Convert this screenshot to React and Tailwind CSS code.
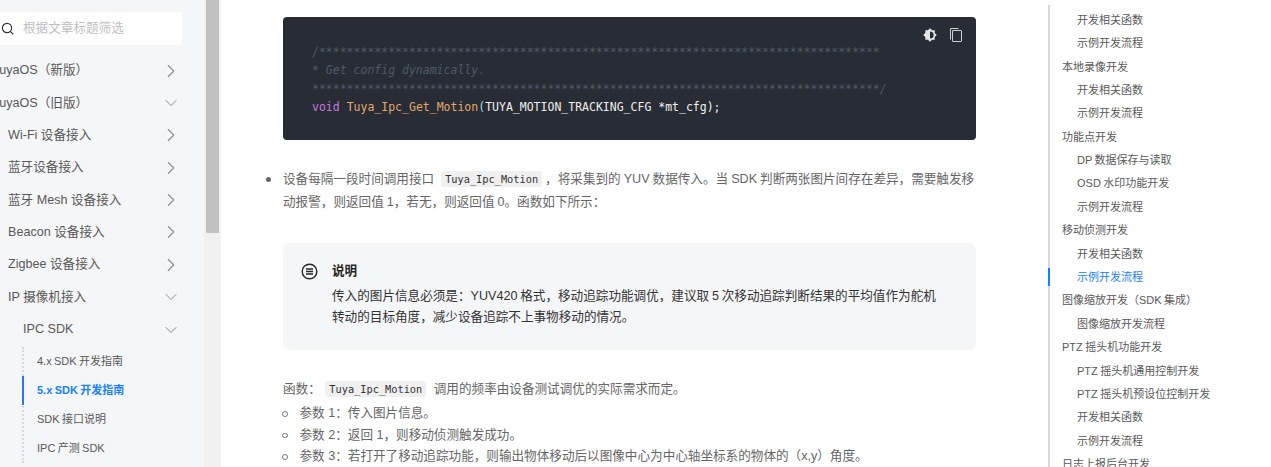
import React from "react";
import { ChevronRight, ChevronDown } from "lucide-react";

const sans = "font-['Liberation_Sans','Noto_Sans_CJK_SC',sans-serif]";
const mono = "font-['DejaVu_Sans_Mono','Noto_Sans_CJK_SC',monospace]";

function NavRow({ label, open, pl }) {
  return (
    <div className={`flex items-center justify-between h-[32.35px] pr-[22px] ${pl}`}>
      <span className="whitespace-nowrap">{label}</span>
      {open ? (
        <ChevronDown size={20} strokeWidth={1.2} className="text-[#8c8c8c] mr-[1px]" />
      ) : (
        <ChevronRight size={22} strokeWidth={1.2} className="text-[#8c8c8c]" />
      )}
    </div>
  );
}

function Sidebar() {
  return (
    <aside className="w-[204px] shrink-0 h-full bg-[#f5f6f8] overflow-hidden text-[12.6px] text-[#595959]">
      <div className="pt-[12px] pr-[22px]">
        <div className="h-[33px] bg-white flex items-center pl-[1px]">
          <svg width="13" height="13" viewBox="0 0 13 13" fill="none" stroke="#333" strokeWidth="1.2">
            <circle cx="6" cy="6" r="4.6" />
            <path d="M9.3 9.3l3 3" />
          </svg>
          <span className="ml-[9px] text-[#bfbfbf]">根据文章标题筛选</span>
        </div>
      </div>
      <div className="mt-[9.6px]">
        <NavRow label="TuyaOS（新版）" pl="-ml-[8px]" />
        <NavRow label="TuyaOS（旧版）" open pl="-ml-[8px]" />
        <NavRow label="Wi-Fi 设备接入" pl="pl-[8px]" />
        <NavRow label="蓝牙设备接入" pl="pl-[8px]" />
        <NavRow label="蓝牙 Mesh 设备接入" pl="pl-[8px]" />
        <NavRow label="Beacon 设备接入" pl="pl-[8px]" />
        <NavRow label="Zigbee 设备接入" pl="pl-[8px]" />
        <NavRow label="IP 摄像机接入" open pl="pl-[8px]" />
        <NavRow label="IPC SDK" open pl="pl-[23px]" />
      </div>
      <div className="ml-[22px] border-l-2 border-dotted border-[#d9d9d9] text-[11px] mt-[1.4px] [word-spacing:-0.7px]">
        <div className="h-[29px] flex items-center pl-[13px]">4.x SDK 开发指南</div>
        <div className="h-[29px] flex items-center pl-[13px] -ml-[2px] border-l-2 border-[#1a7fff] text-[#1a7fff] font-bold">
          5.x SDK 开发指南
        </div>
        <div className="h-[29px] flex items-center pl-[13px]">SDK 接口说明</div>
        <div className="h-[29px] flex items-center pl-[13px]">IPC 产测 SDK</div>
      </div>
    </aside>
  );
}

function Scrollbar() {
  return (
    <div className="w-[17px] shrink-0 h-full bg-[#f1f1f1] px-[2px]">
      <div className="h-[233px] bg-[#c1c1c1]" />
    </div>
  );
}

function Code({ children, className }) {
  return (
    <code className={`${mono} text-[10.3px] leading-[14px] text-[#333] bg-[#f0f0f0] rounded-[3px] px-[4px] py-[2px] ${className}`}>
      {children}
    </code>
  );
}

function CodeBlock() {
  return (
    <div className={`h-[123px] bg-[#282c34] rounded-[4px] pt-[26px] pl-[29px] relative ${mono} text-[11.5px] leading-[18.4px] whitespace-pre`}>
      <div className="absolute right-[12px] top-[10px] flex items-center gap-[10px]">
        <svg width="16" height="16" viewBox="0 0 16 16">
          <path fill="#e6e6e6" d="M8 1.2l2.1 2.1h2.6v2.6L14.8 8l-2.1 2.1v2.6h-2.6L8 14.8l-2.1-2.1H3.3v-2.6L1.2 8l2.1-2.1V3.3h2.6z" />
          <circle cx="8" cy="8" r="3.6" fill="#282c34" />
          <path fill="#e6e6e6" d="M8 3.6a4.4 4.4 0 0 0 0 8.8z" />
        </svg>
        <svg width="16" height="16" viewBox="0 0 16 16" fill="none" stroke="#d0d0d0" strokeWidth="1">
          <path d="M2.5 12.5V1.5h8" />
          <rect x="4.5" y="3.5" width="9" height="11" rx="0.5" />
        </svg>
      </div>
      <div className="text-[#4e5a6a] italic">{"/" + "*".repeat(81)}</div>
      <div className="text-[#4e5a6a] italic">* Get config dynamically.</div>
      <div className="text-[#4e5a6a] italic">{"*".repeat(82) + "/"}</div>
      <div className="text-[#f0f0f0]">
        <span className="text-[#c678dd]">void</span>{" "}
        <span className="text-[#e5a86c]">Tuya_Ipc_Get_Motion</span>
        <span className="text-[#9fdce6]">(</span>TUYA_MOTION_TRACKING_CFG *mt_cfg);
      </div>
    </div>
  );
}

function Note() {
  return (
    <div className="mt-[29px] h-[107px] bg-[#f5f6f8] rounded-[8px] pl-[18px] pt-[18px] flex text-[#333] leading-[21px]">
      <svg width="17" height="17" viewBox="0 0 17 17" fill="none" stroke="#262626" strokeWidth="1.4" className="mt-[2px] shrink-0">
        <circle cx="8.5" cy="8.5" r="7.3" />
        <path d="M5 6h7M5 8.5h7M5 11h7" />
      </svg>
      <div className="ml-[14px] whitespace-nowrap [word-spacing:-0.7px]">
        <div className="font-bold text-[#262626]">说明</div>
        <div className="mt-[4px]">
          传入的图片信息必须是：YUV420 格式，移动追踪功能调优，建议取 5 次移动追踪判断结果的平均值作为舵机
          <br />
          转动的目标角度，减少设备追踪不上事物移动的情况。
        </div>
      </div>
    </div>
  );
}

function Main() {
  return (
    <main className="w-[827px] shrink-0 h-full overflow-hidden pl-[62px] pr-[72px] pt-[17px] text-[12.6px] text-[#666]">
      <CodeBlock />
      <div className="mt-[28px] flex leading-[23px]">
        <span className="w-[4.5px] h-[4.5px] rounded-full bg-[#666] mt-[9px] -ml-[17px] mr-[12.5px] shrink-0" />
        <p className="w-[693px] whitespace-nowrap [word-spacing:-0.5px]">
          设备每隔一段时间调用接口 <Code className="ml-[4px]">Tuya_Ipc_Motion</Code> ，将采集到的 YUV 数据传入。当 SDK 判断两张图片间存在差异，需要触发移
          <br />
          动报警，则返回值 1，若无，则返回值 0。函数如下所示：
        </p>
      </div>
      <Note />
      <p className="mt-[27px] leading-[24px]">
        函数： <Code className="ml-[1px] mr-[4px]">Tuya_Ipc_Motion</Code> 调用的频率由设备测试调优的实际需求而定。
      </p>
      <div className="leading-[21.5px] mt-[2px]">
        {[
          "参数 1：传入图片信息。",
          "参数 2：返回 1，则移动侦测触发成功。",
          "参数 3：若打开了移动追踪功能，则输出物体移动后以图像中心为中心轴坐标系的物体的（x,y）角度。",
        ].map((t) => (
          <div key={t} className="flex items-center whitespace-nowrap">
            <span className="w-[5.5px] h-[5.5px] rounded-full border border-[#777] -ml-[1px] mr-[12px] shrink-0" />
            {t}
          </div>
        ))}
      </div>
    </main>
  );
}

const toc = [
  ["开发相关函数", 1],
  ["示例开发流程", 1],
  ["本地录像开发", 0],
  ["开发相关函数", 1],
  ["示例开发流程", 1],
  ["功能点开发", 0],
  ["DP 数据保存与读取", 1],
  ["OSD 水印功能开发", 1],
  ["示例开发流程", 1],
  ["移动侦测开发", 0],
  ["开发相关函数", 1],
  ["示例开发流程", 2],
  ["图像缩放开发（SDK 集成）", 0],
  ["图像缩放开发流程", 1],
  ["PTZ 摇头机功能开发", 0],
  ["PTZ 摇头机通用控制开发", 1],
  ["PTZ 摇头机预设位控制开发", 1],
  ["开发相关函数", 1],
  ["示例开发流程", 1],
  ["日志上报后台开发", 0],
];

function Toc() {
  return (
    <nav className="flex-1 h-full overflow-hidden pt-[5px] text-[11px] text-[#595959] [word-spacing:-0.7px]">
      <div className="border-l-2 border-[#d9d9d9] h-[470px] pt-[3.3px]">
        {toc.map(([t, k], i) => (
          <div
            key={i}
            className={`h-[23.4px] flex items-center whitespace-nowrap ${k === 0 ? "pl-[12px]" : "pl-[27px]"} ${k === 2 ? "text-[#1a7fff] relative" : ""}`}
          >
            {k === 2 && <span className="absolute -left-[2px] top-[2px] w-[2px] h-[18px] bg-[#1a7fff]" />}
            {t}
          </div>
        ))}
      </div>
    </nav>
  );
}

export default function App() {
  return (
    <div className={`w-[1271px] h-[467px] overflow-hidden flex bg-white ${sans}`}>
      <Sidebar />
      <Scrollbar />
      <Main />
      <Toc />
    </div>
  );
}
